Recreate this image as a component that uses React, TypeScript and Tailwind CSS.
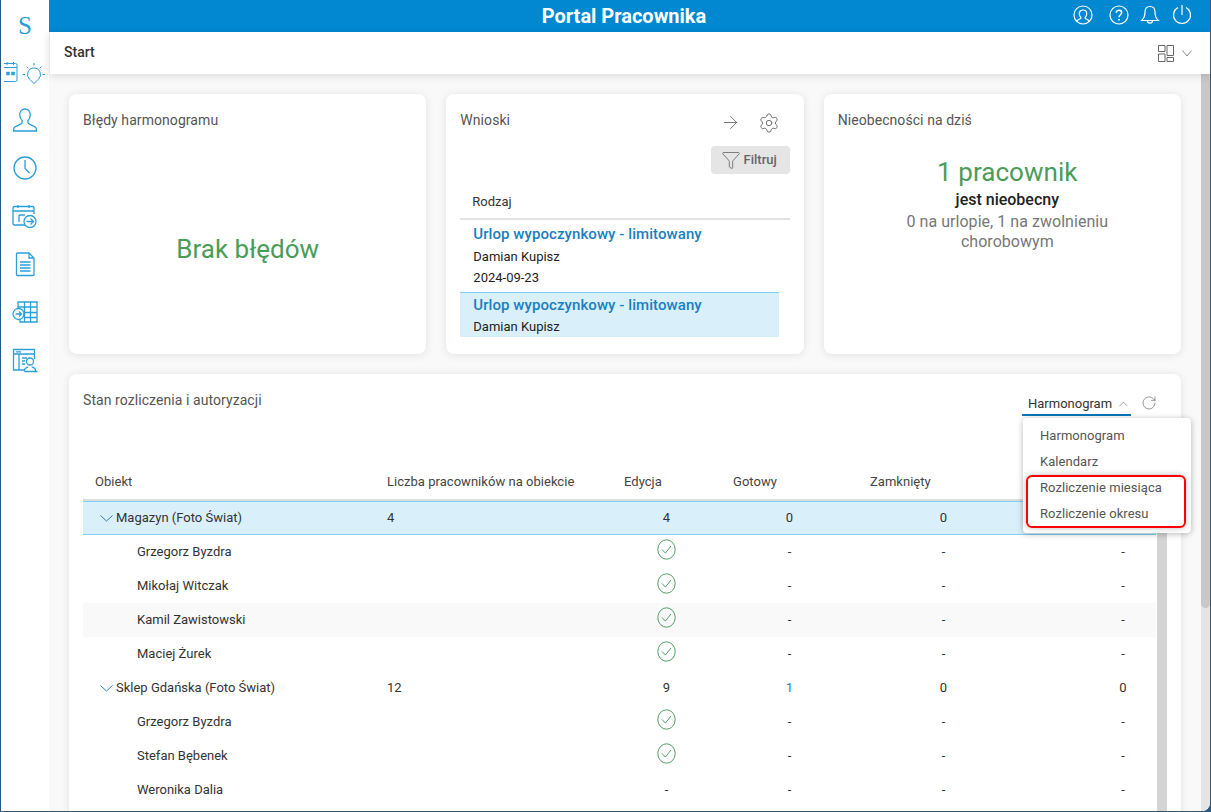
import {ArrowRight, ChevronUp, Funnel, RotateCw, Settings} from "lucide-react";

type Row = {
    name: string;
    group?: boolean;
    count?: string;
    edit: string;
    ready: string;
    closed: string;
    last: string;
    selected?: boolean;
    striped?: boolean;
};

const rows: Row[] = [
    {name: "Magazyn (Foto Świat)", group: true, count: "4", edit: "4", ready: "0", closed: "0", last: "", selected: true},
    {name: "Grzegorz Byzdra", edit: "ok", ready: "-", closed: "-", last: "-"},
    {name: "Mikołaj Witczak", edit: "ok", ready: "-", closed: "-", last: "-"},
    {name: "Kamil Zawistowski", edit: "ok", ready: "-", closed: "-", last: "-", striped: true},
    {name: "Maciej Żurek", edit: "ok", ready: "-", closed: "-", last: "-"},
    {name: "Sklep Gdańska (Foto Świat)", group: true, count: "12", edit: "9", ready: "1", closed: "0", last: "0"},
    {name: "Grzegorz Byzdra", edit: "ok", ready: "-", closed: "-", last: "-"},
    {name: "Stefan Bębenek", edit: "ok", ready: "-", closed: "-", last: "-"},
    {name: "Weronika Dalia", edit: "-", ready: "-", closed: "-", last: "-"},
];

const columns = "grid grid-cols-[292px_237px_109px_137px_171px_127px]";
const cardShadow = "shadow-[0_1px_8px_rgba(0,0,0,0.1)]";

function CheckIcon() {
    return (
        <svg width="19" height="21" viewBox="0 0 19 21" fill="none" className="mb-[5px]">
            <ellipse cx="9.5" cy="10.5" rx="8.7" ry="9.7" stroke="#4f9f63" strokeWidth="1"/>
            <path d="M5 10.5l3.4 3.6L14 7" stroke="#4f9f63" strokeWidth="1"/>
        </svg>
    );
}

function Chevron({color, w = 13}: {color: string; w?: number}) {
    return (
        <svg width={w} height="7" viewBox={`0 0 ${w} 7`} fill="none" stroke={color} strokeWidth="1">
            <path d={`M.5.500L${w / 2} 6L${w - 0.5} .500`}/>
        </svg>
    );
}

function SideIcon({children, w = 26}: {children: React.ReactNode; w?: number}) {
    return (
        <svg width={w} height="26" viewBox={`0 0 ${w} 26`} fill="none" stroke="#2a9fd8" strokeWidth="1.3">
            {children}
        </svg>
    );
}

function Sidebar() {
    return (
        <aside className="w-12 shrink-0 bg-white flex flex-col items-center">
            <div className="h-[50px] flex items-center justify-center font-['Liberation_Serif',serif] text-[25px] leading-none text-[#2a9fd8]">S</div>
            <div className="h-[46px] flex items-center justify-center">
                <SideIcon w={42}>
                    <path d="M0 3.500h11.500a1.500 1.500 0 0 1 1.500 1.500v15a1.500 1.500 0 0 1-1.500 1.500H0" strokeWidth="1"/>
                    <path d="M0 7.500h13M3 2v3M9.500 2v3" strokeWidth="1"/>
                    <path d="M2.500 12h3v3h-3zM7.500 12h3v3h-3z" fill="#2a9fd8" strokeWidth="0.5"/>
                    <path d="M30 8a6.500 6.500 0 0 1 4.500 11.200L30 23.500l-4.500-4.300A6.500 6.500 0 0 1 30 8z" strokeWidth="1"/>
                    <path d="M30 3v2.500M18.500 14.500H21M41 14.500h-2.500M22.500 6.500l1.800 1.800M37.500 6.500l-1.800 1.800" strokeWidth="1"/>
                </SideIcon>
            </div>
            <div className="h-12 flex items-center justify-center">
                <SideIcon>
                    <path d="M13 2c-3.200 0-5.300 2.500-5.300 5.800 0 2.400 1 4.400 2.400 5.600v1.500c0 1.200-.8 2-2 2.500L3.800 19.400C2.400 20 1.600 21 1.600 22.300V24h22.800v-1.700c0-1.300-.8-2.300-2.200-2.900l-4.300-2c-1.200-.5-2-1.300-2-2.500v-1.500c1.400-1.200 2.400-3.200 2.400-5.600C18.300 4.500 16.200 2 13 2z"/>
                </SideIcon>
            </div>
            <div className="h-12 flex items-center justify-center">
                <SideIcon>
                    <circle cx="13" cy="13" r="11"/>
                    <path d="M13 5v8.500l4.500 4.500"/>
                </SideIcon>
            </div>
            <div className="h-12 flex items-center justify-center">
                <SideIcon>
                    <path d="M13 22H2.500a1.500 1.500 0 0 1-1.500-1.500V5a1.500 1.500 0 0 1 1.500-1.500h18A1.500 1.500 0 0 1 22 5v6"/>
                    <path d="M1 8h21M6 2v3M17 2v3M7 12h6M7 12v7"/>
                    <circle cx="18" cy="18.500" r="6"/>
                    <path d="M14.500 18.500h7M18.500 15.500l3 3-3 3"/>
                </SideIcon>
            </div>
            <div className="h-12 flex items-center justify-center">
                <SideIcon>
                    <path d="M5.500 2H17l5 5v16.500a1 1 0 0 1-1 1H5.500a1 1 0 0 1-1-1V3a1 1 0 0 1 1-1z"/>
                    <path d="M17 2v5h5M8 11h10.500M8 14h10.500M8 17h10.500M8 20h10.500"/>
                </SideIcon>
            </div>
            <div className="h-12 flex items-center justify-center">
                <SideIcon>
                    <path d="M6 9V3h19v20H8v-3M6 8h19M12.500 3v20M18.500 3v20M12 13.500h13M12 18.500h13M6 3v5"/>
                    <circle cx="6.500" cy="15" r="5.500"/>
                    <path d="M3.500 15h6M7 12.500l2.500 2.500L7 17.500"/>
                </SideIcon>
            </div>
            <div className="h-12 flex items-center justify-center">
                <SideIcon>
                    <path d="M12 23H1.500V2.500h21V12"/>
                    <path d="M1.500 7h21M4 4.800h5M7 7v16M10 11h5M10 14h3M10 17h3"/>
                    <circle cx="18" cy="14.500" r="3.500"/>
                    <path d="M12.500 24.500v-1.500c0-2 2-2.500 3.800-3.200M23.500 24.500v-1.500c0-2-2-2.500-3.800-3.200M12.500 24.500h13"/>
                </SideIcon>
            </div>
        </aside>
    );
}

function TopBar() {
    return (
        <header className="h-8 shrink-0 bg-[#0288d1] relative flex items-center justify-center pr-[11px]">
            <h1 className="text-[20px] font-bold text-white">Portal Pracownika</h1>
            <div className="absolute right-[18px] top-[5px] flex items-center gap-[12px] text-white">
                <svg width="20" height="20" viewBox="0 0 20 20" fill="none" stroke="currentColor" strokeWidth="1.200">
                    <circle cx="10" cy="10" r="9"/>
                    <path d="M3.800 16.500c.4-1.500 1.500-2 4-3v-1.300c-1-.8-1.500-2-1.500-3.500 0-2.200 1.500-3.700 3.700-3.700s3.700 1.500 3.700 3.700c0 1.500-.5 2.700-1.500 3.500v1.300c2.500 1 3.600 1.500 4 3"/>
                </svg>
                <svg width="20" height="20" viewBox="0 0 20 20" fill="none" stroke="currentColor" strokeWidth="1.200" className="ml-[4px] mr-[-1px]">
                    <circle cx="10" cy="10" r="9"/>
                    <path d="M7.300 7.800c0-1.600 1.200-2.600 2.700-2.600s2.700 1 2.700 2.400c0 2.200-2.700 2.200-2.700 4.600" strokeWidth="1.500"/>
                    <path d="M10 14v1.500" strokeWidth="1.700"/>
                </svg>
                <svg width="20" height="20" viewBox="0 0 20 20" fill="none" stroke="currentColor" strokeWidth="1.200">
                    <path d="M10 1.500c-3.200 0-5 2.500-5 5.500 0 4.500-1.200 6.500-3.300 8.500h16.600C16.200 13.500 15 11.500 15 7c0-3-1.800-5.500-5-5.500z"/>
                    <path d="M7.500 15.500c0 1.700 1 2.700 2.500 2.700s2.500-1 2.500-2.700"/>
                </svg>
                <svg width="20" height="20" viewBox="0 0 20 20" fill="none" stroke="currentColor" strokeWidth="1.200">
                    <path d="M6 2.500a8.500 8.500 0 1 0 8 0"/>
                    <path d="M10 0v10"/>
                </svg>
            </div>
        </header>
    );
}

function SubBar() {
    return (
        <div className="h-[42px] shrink-0 bg-white border-l border-[#e6e6e6] shadow-[0_2px_8px_rgba(0,0,0,0.12)] relative z-10 flex items-center justify-between pl-[14px] pr-[18px]">
            <span className="text-[14px] font-medium text-[#333] mb-[2px]">Start</span>
            <div className="flex items-center gap-[8px]">
                <svg width="16" height="17" viewBox="0 0 16 17" fill="none" stroke="#666" strokeWidth="1">
                    <path d="M.5.500h6.500v6H.5zM.5 9h6.500v7.500H.5zM9 .500h6.500v10H9zM9 12.500h6.500v4H9z"/>
                </svg>
                <Chevron color="#888" w={10}/>
            </div>
        </div>
    );
}

function ErrorsCard() {
    return (
        <section className={`h-[260px] bg-white rounded-lg ${cardShadow} p-[14px] flex flex-col`}>
            <h2 className="text-[14px] tracking-[0.07px] text-[#555] leading-[24px]">Błędy harmonogramu</h2>
            <div className="flex-1 flex items-center justify-center pt-[26px]">
                <span className="text-[26px] text-[#4a9d57]">Brak błędów</span>
            </div>
        </section>
    );
}

function RequestsCard() {
    return (
        <section className={`h-[260px] bg-white rounded-lg ${cardShadow} px-[14px] pt-[14px] flex flex-col overflow-hidden`}>
            <div className="flex justify-between h-[24px]">
                <h2 className="text-[14px] tracking-[0.07px] text-[#555] leading-[24px]">Wnioski</h2>
                <div className="flex items-center gap-[17px] pr-[10px] pt-[5px] text-[#666]">
                    <ArrowRight size={21} strokeWidth={1}/>
                    <Settings size={22} strokeWidth={1}/>
                </div>
            </div>
            <div className="flex justify-end mt-[14px]">
                <button className="w-[79px] h-[28px] bg-[#e5e5e5] rounded flex items-center justify-center gap-[3px] pr-[3px] text-[13px] font-medium text-[#666]">
                    <Funnel size={20} strokeWidth={1}/>
                    Filtruj
                </button>
            </div>
            <div className="mt-[14px] h-[32px] pl-[12px] border-b-2 border-[#e2e2e2] text-[13px] text-[#333] flex items-center pb-[3px]">Rodzaj</div>
            <div className="pl-[13px] h-[72px] flex flex-col">
                <span className="text-[15px] font-medium tracking-[0.07px] text-[#1a7fc0] leading-[26px] mt-[1px]">Urlop wypoczynkowy - limitowany</span>
                <span className="text-[13px] text-[#222] leading-[20px]">Damian Kupisz</span>
                <span className="text-[13px] text-[#222] leading-[20px] mt-[1px]">2024-09-23</span>
            </div>
            <div className="w-[319px] h-[45px] pl-[13px] bg-[#d9f0fb] border-t border-[#7fd0f0] flex flex-col">
                <span className="text-[15px] font-medium tracking-[0.07px] text-[#1a7fc0] leading-[24px]">Urlop wypoczynkowy - limitowany</span>
                <span className="text-[13px] text-[#222] leading-[20px]">Damian Kupisz</span>
            </div>
        </section>
    );
}

function AbsenceCard() {
    return (
        <section className={`h-[260px] bg-white rounded-lg ${cardShadow} p-[14px] flex flex-col`}>
            <h2 className="text-[14px] tracking-[0.07px] text-[#555] leading-[24px]">Nieobecności na dziś</h2>
            <div className="flex flex-col items-center text-center mt-[22px] pl-[10px]">
                <span className="text-[26px] tracking-[0.05px] text-[#4a9d57] leading-[36px]">1 pracownik</span>
                <span className="text-[16px] font-medium text-[#222] leading-[20px]">jest nieobecny</span>
                <span className="text-[16px] tracking-[0.04px] text-[#777] leading-[20px] mt-[2px] w-[240px]">0 na urlopie, 1 na zwolnieniu chorobowym</span>
            </div>
        </section>
    );
}

function SettlementMenu() {
    return (
        <div className="absolute right-[-34px] top-[30px] z-20 w-[168px] h-[115px] bg-white rounded shadow-[0_1px_6px_rgba(0,0,0,0.28)] pt-[5px] text-[13px] tracking-[0.05px] text-[#555]">
            {["Harmonogram", "Kalendarz", "Rozliczenie miesiąca", "Rozliczenie okresu"].map((item) => (
                <div key={item} className="h-[26px] pl-[17px] flex items-center">{item}</div>
            ))}
            <div className="absolute left-[3px] top-[57px] w-[160px] h-[53px] border-2 border-[#f00] rounded-md shadow-[0_0_6px_rgba(0,0,0,0.25)]"/>
        </div>
    );
}

function StatusCard() {
    return (
        <section className={`bg-white rounded-lg ${cardShadow} px-[14px] pt-[14px] h-[470px] shrink-0`}>
            <div className="flex justify-between h-[29px]">
                <h2 className="text-[14px] tracking-[0.07px] text-[#555] leading-[24px]">Stan rozliczenia i autoryzacji</h2>
                <div className="relative flex items-start gap-[10px] mr-[10px]">
                    <div className="w-[109px] h-[28px] pt-[5px] pl-[6px] border-b-2 border-[#0b76b8] flex items-center gap-[4px] text-[13px] text-[#333]">
                        Harmonogram
                        <ChevronUp size={16} strokeWidth={1} color="#666"/>
                    </div>
                    <RotateCw size={16} strokeWidth={1} color="#666" className="mt-[7px]"/>
                    <SettlementMenu/>
                </div>
            </div>
            <div className="flex mt-[51px]">
                <div className="w-[1073px] pb-[20px]">
                    <div className={`${columns} h-[33px] border-b-2 border-[#dedede] text-[13px] tracking-[0.03px] text-[#444] items-center pb-[3px]`}>
                        <span className="pl-3">Obiekt</span>
                        <span className="pl-3">Liczba pracowników na obiekcie</span>
                        <span className="pl-3">Edycja</span>
                        <span className="pl-3">Gotowy</span>
                        <span className="pl-3">Zamknięty</span>
                        <span/>
                    </div>
                    {rows.map((row, i) => (
                        <div
                            key={i}
                            className={`${columns} h-[34px] items-center text-[13px] text-[#333] ${row.selected ? "bg-[#d9f0fb] border-y border-[#7fd0f0]" : ""} ${row.striped ? "bg-[#f9f9f9]" : ""}`}
                        >
                            {row.group ? (
                                <span className="pl-[17px] flex items-center gap-[3px]">
                                    <Chevron color="#2a7fb8"/>
                                    {row.name}
                                </span>
                            ) : (
                                <span className="pl-[54px]">{row.name}</span>
                            )}
                            <span className="pl-3">{row.count}</span>
                            <span className="flex justify-center">{row.edit === "ok" ? <CheckIcon/> : row.edit}</span>
                            <span className={`text-center ${row.ready === "1" ? "text-[#1a7fc0]" : ""}`}>{row.ready}</span>
                            <span className="text-center">{row.closed}</span>
                            <span className="text-center pl-[61px]">{row.last}</span>
                        </div>
                    ))}
                </div>
                <div className="w-[10px] ml-px mt-[33px] bg-[#d4d4d4]"/>
            </div>
        </section>
    );
}

export default function App() {
    return (
        <div className="h-screen px-px pb-px bg-[#2a5a80]">
            <div className="h-full flex overflow-hidden rounded-br-lg bg-[#f9f9f9] font-['Roboto',sans-serif]">
                <Sidebar/>
                <main className="flex-1 min-w-0 flex flex-col">
                    <TopBar/>
                    <SubBar/>
                    <div className="flex-1 min-h-0 flex">
                        <div className="flex-1 min-w-0 p-5 flex flex-col gap-5 overflow-hidden">
                            <div className="grid grid-cols-3 gap-5">
                                <ErrorsCard/>
                                <RequestsCard/>
                                <AbsenceCard/>
                            </div>
                            <StatusCard/>
                        </div>
                        <div className="w-[9px] shrink-0 bg-[#e5e5e5]">
                            <div className="h-[534px] bg-[#c8c8c8] rounded-b-md"/>
                        </div>
                    </div>
                </main>
            </div>
        </div>
    );
}
